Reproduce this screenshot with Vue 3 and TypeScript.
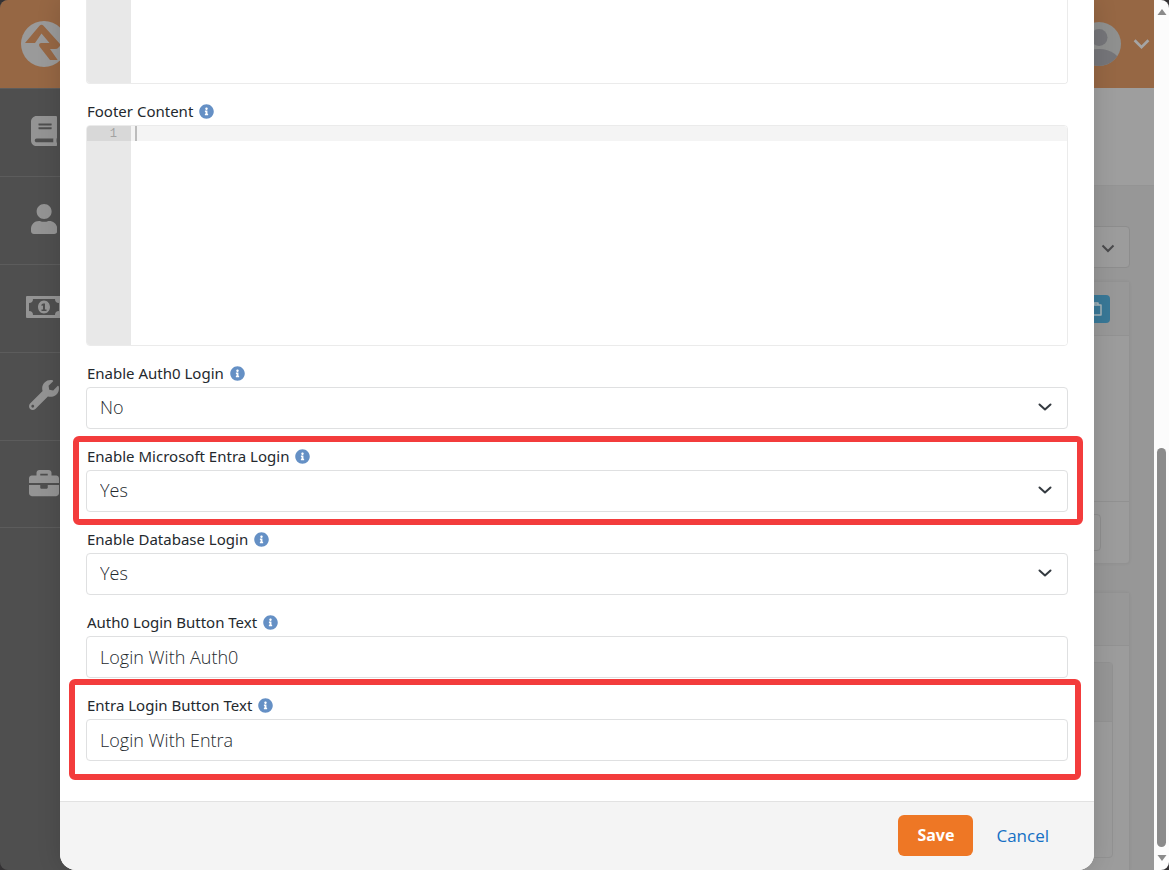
<script setup lang="ts">
import { ref } from 'vue'

interface Field {
  id: string
  label: string
  kind: 'select' | 'text'
  value: string
  highlight?: 'select-mark' | 'text-mark'
}

const header = ref('')
const footer = ref('')

const fields = ref<Field[]>([
  { id: 'auth0', label: 'Enable Auth0 Login', kind: 'select', value: 'No' },
  { id: 'entra', label: 'Enable Microsoft Entra Login', kind: 'select', value: 'Yes', highlight: 'select-mark' },
  { id: 'database', label: 'Enable Database Login', kind: 'select', value: 'Yes' },
  { id: 'auth0-text', label: 'Auth0 Login Button Text', kind: 'text', value: 'Login With Auth0' },
  { id: 'entra-text', label: 'Entra Login Button Text', kind: 'text', value: 'Login With Entra', highlight: 'text-mark' },
])

const infoPath =
  'M256 8C119.043 8 8 119.083 8 256c0 136.997 111.043 248 248 248s248-111.003 248-248C504 119.083 392.957 8 256 8zm0 110c23.196 0 42 18.804 42 42s-18.804 42-42 42-42-18.804-42-42 18.804-42 42-42zm56 254c0 6.627-5.373 12-12 12h-88c-6.627 0-12-5.373-12-12v-24c0-6.627 5.373-12 12-12h12v-64h-12c-6.627 0-12-5.373-12-12v-24c0-6.627 5.373-12 12-12h64c6.627 0 12 5.373 12 12v100h12c6.627 0 12 5.373 12 12v24z'

const navItems = [
  {
    name: 'Library',
    box: '0 0 448 512',
    path: 'M448 360V24c0-13.3-10.7-24-24-24H96C43 0 0 43 0 96v320c0 53 43 96 96 96h328c13.3 0 24-10.7 24-24v-16c0-7.5-3.5-14.3-8.9-18.7-4.2-15.4-4.2-59.3 0-74.7 5.4-4.3 8.9-11.1 8.9-18.6zM128 134c0-3.3 2.7-6 6-6h212c3.3 0 6 2.7 6 6v20c0 3.3-2.7 6-6 6H134c-3.3 0-6-2.7-6-6v-20zm0 64c0-3.3 2.7-6 6-6h212c3.3 0 6 2.7 6 6v20c0 3.3-2.7 6-6 6H134c-3.3 0-6-2.7-6-6v-20zm253.4 250H96c-17.7 0-32-14.3-32-32 0-17.6 14.4-32 32-32h285.4c-1.9 17.1-1.9 46.9 0 64z',
  },
  {
    name: 'People',
    box: '0 0 448 512',
    path: 'M224 256c70.7 0 128-57.3 128-128S294.7 0 224 0 96 57.3 96 128s57.3 128 128 128zm89.6 32h-16.7c-22.2 10.2-46.9 16-72.9 16s-50.6-5.8-72.9-16h-16.7C60.2 288 0 348.2 0 422.4V464c0 26.5 21.5 48 48 48h352c26.5 0 48-21.5 48-48v-41.6c0-74.2-60.2-134.4-134.4-134.4z',
  },
  {
    name: 'Finance',
    box: '0 0 36 30',
    path: 'M1 4H35a1 1 0 0 1 1 1V25a1 1 0 0 1-1 1H1a1 1 0 0 1-1-1V5a1 1 0 0 1 1-1ZM7 7A4 4 0 0 1 3 11V19A4 4 0 0 1 7 23H29A4 4 0 0 1 33 19V11A4 4 0 0 1 29 7ZM18 8.500C21.300 8.500 24 11.400 24 15S21.300 21.500 18 21.500 12 18.600 12 15 14.700 8.500 18 8.500ZM17 11.500 15.500 12.500V14L17 13.500V17.500H15.500V19H20.500V17.500H19V11.500Z',
  },
  {
    name: 'Tools',
    box: '0 0 512 512',
    path: 'M507.73 109.1c-2.24-9.03-13.54-12.09-20.12-5.51l-74.36 74.36-67.88-11.31-11.31-67.88 74.36-74.36c6.62-6.62 3.43-17.9-5.66-20.16-47.38-11.74-99.55.91-136.58 37.93-39.64 39.64-50.55 97.1-34.05 147.2L18.74 402.76c-24.99 24.99-24.99 65.51 0 90.5 24.99 24.99 65.51 24.99 90.5 0l213.21-213.21c50.12 16.71 107.47 5.68 147.37-34.22 37.07-37.07 49.7-89.32 37.91-136.73zM64 472c-13.25 0-24-10.75-24-24 0-13.26 10.75-24 24-24s24 10.74 24 24c0 13.25-10.75 24-24 24z',
  },
  {
    name: 'Admin',
    box: '0 0 512 512',
    path: 'M320 336c0 8.84-7.16 16-16 16h-96c-8.84 0-16-7.16-16-16v-48H0v144c0 25.6 22.4 48 48 48h416c25.6 0 48-22.4 48-48V288H320v48zm144-208h-80V80c0-25.6-22.4-48-48-48H176c-25.6 0-48 22.4-48 48v48H48c-25.6 0-48 22.4-48 48v80h512v-80c0-25.6-22.4-48-48-48zm-144 0H192V96h128v32z',
  },
]
</script>

<template>
  <div class="window">
    <div class="app">
      <nav class="sidebar" aria-label="Main">
        <a class="logo" href="#" aria-label="Home">
          <svg viewBox="0 0 46 46" aria-hidden="true">
            <circle cx="23" cy="23" r="23" fill="#9a9a9a" />
            <path
              d="M18.500 4.800Q20.500 2.600 22.500 4.800L38.600 22.500Q40 24.500 37.500 26.500 36.500 28 34 28H29L36.700 39H29L18.500 25.500Q17 22 20.500 22H28.500L20.500 12.500 14 22H4Z"
              fill="#966744"
            />
          </svg>
        </a>
        <a v-for="item in navItems" :key="item.name" class="nav-item" href="#" :aria-label="item.name">
          <svg :viewBox="item.box" aria-hidden="true"><path :d="item.path" fill-rule="evenodd" /></svg>
        </a>
      </nav>
      <div class="main">
        <header class="topbar">
          <svg class="avatar" viewBox="0 0 44 44" aria-hidden="true">
            <defs>
              <clipPath id="face"><circle cx="22" cy="22" r="22" /></clipPath>
            </defs>
            <g clip-path="url(#face)">
              <rect width="44" height="44" fill="#8f908f" />
              <circle cx="22" cy="15.500" r="8.500" fill="#757579" />
              <ellipse cx="22" cy="43" rx="22" ry="16" fill="#757579" />
            </g>
          </svg>
          <svg class="caret" viewBox="0 0 16 16" aria-hidden="true">
            <path d="M1.500 4 8 10.500l6.500-6.500" fill="none" stroke="#a5a5a5" stroke-width="2.500" />
          </svg>
        </header>
        <div class="title-band"></div>
        <div class="content">
          <div class="picker">
            <svg viewBox="0 0 16 16" aria-hidden="true">
              <path d="M2.500 6.500 8 12l5.500-5.500" fill="none" stroke="#4a4a4c" stroke-width="2" />
            </svg>
          </div>
          <section class="panel panel-first">
            <div class="panel-head">
              <span class="chip">
                <svg viewBox="0 0 16 16" aria-hidden="true">
                  <path d="M3 4h10v10H3zM6 4V2h4v2" fill="none" stroke="#a8b4b9" stroke-width="1.500" stroke-linejoin="round" />
                </svg>
              </span>
            </div>
            <div class="panel-body"></div>
            <div class="panel-foot"><div class="page-size"></div></div>
          </section>
          <section class="panel panel-second">
            <div class="panel-head"></div>
            <div class="nested"><div class="nested-head"></div></div>
          </section>
        </div>
      </div>

      <div class="modal" role="dialog" aria-modal="true" aria-label="Block settings">
        <form class="modal-form" @submit.prevent>
          <div class="modal-body">
            <div class="field">
              <div class="editor editor-top">
                <div class="gutter"></div>
                <textarea v-model="header" class="code" aria-label="Header Content"></textarea>
              </div>
            </div>
            <div class="field">
              <div class="label-row">
                <label for="footer-content">Footer Content</label>
                <svg class="info" viewBox="0 0 512 512" aria-hidden="true"><path :d="infoPath" /></svg>
              </div>
              <div class="editor">
                <div class="gutter"><span class="line-number">1</span></div>
                <textarea id="footer-content" v-model="footer" class="code code-active"></textarea>
                <span class="cursor"></span>
              </div>
            </div>
            <div v-for="field in fields" :key="field.id" class="field" :class="field.highlight">
              <div class="label-row">
                <label :for="field.id">{{ field.label }}</label>
                <svg class="info" viewBox="0 0 512 512" aria-hidden="true"><path :d="infoPath" /></svg>
              </div>
              <div class="control-wrap">
                <select v-if="field.kind === 'select'" :id="field.id" v-model="field.value" class="control">
                  <option>Yes</option>
                  <option>No</option>
                </select>
                <input v-else :id="field.id" v-model="field.value" class="control" type="text" />
                <svg v-if="field.kind === 'select'" class="chevron" viewBox="0 0 16 16" aria-hidden="true">
                  <path d="M2.500 5.500 8 10.500l5.500-5" fill="none" stroke="#343a40" stroke-width="2" stroke-linecap="round" stroke-linejoin="round" />
                </svg>
              </div>
            </div>
          </div>
          <footer class="modal-footer">
            <button class="save" type="submit">Save</button>
            <a class="cancel" href="#">Cancel</a>
          </footer>
        </form>
      </div>
    </div>

    <div class="scrollbar" aria-hidden="true">
      <svg viewBox="0 0 10 8"><path d="M5 1 9.500 7H.5Z" /></svg>
      <div class="track"><div class="thumb"></div></div>
      <svg viewBox="0 0 10 8"><path d="M5 7 9.500 1H.5Z" /></svg>
    </div>
  </div>
</template>

<style>
body {
  margin: 0;
  background: #343234;
}
</style>

<style scoped>
.window,
.window * {
  box-sizing: border-box;
}
.window {
  display: flex;
  min-height: 100vh;
  overflow: hidden;
  border-radius: 8px;
  font-family: "Open Sans", "Noto Sans", sans-serif;
  color: #343a40;
}
.app {
  position: relative;
  display: flex;
  flex: 1;
  min-width: 0;
  overflow: hidden;
}
.sidebar {
  display: flex;
  flex-direction: column;
  width: 88px;
  background: #4f4f4f;
}
.logo {
  display: flex;
  align-items: center;
  justify-content: center;
  height: 88px;
  background: #966744;
}
.logo svg {
  width: 46px;
  height: 46px;
}
.nav-item {
  display: flex;
  align-items: center;
  justify-content: center;
  height: 88px;
  padding-bottom: 3px;
  border-top: 1px solid #5c5c5c;
}
.nav-item:last-child {
  border-bottom: 1px solid #5c5c5c;
}
.nav-item svg {
  height: 30px;
  fill: #949494;
}
.main {
  display: flex;
  flex: 1;
  flex-direction: column;
  background: #979797;
}
.topbar {
  display: flex;
  align-items: center;
  justify-content: flex-end;
  gap: 12px;
  height: 88px;
  padding-right: 4px;
  background: #966744;
}
.avatar {
  width: 44px;
  height: 44px;
}
.caret {
  width: 17px;
  height: 17px;
}
.title-band {
  height: 98px;
  background: #9e9e9e;
  border-bottom: 1px solid #949494;
}
.content {
  display: flex;
  flex: 1;
  flex-direction: column;
  padding: 40px 24px 0;
}
.picker {
  display: flex;
  align-items: center;
  justify-content: flex-end;
  height: 42px;
  padding-right: 13px;
  border: 1px solid #8d8d8d;
  border-radius: 4px;
  background: #9c9c9c;
}
.picker svg {
  width: 16px;
  height: 16px;
}
.panel {
  border: 1px solid #929292;
  border-radius: 4px;
  background: #9c9c9c;
  box-shadow: 0 0 3px rgba(0, 0, 0, 0.06);
}
.panel-head {
  display: flex;
  align-items: center;
  justify-content: flex-end;
  height: 54px;
  padding-right: 19px;
  border-bottom: 1px solid #929292;
  background: #989898;
}
.panel-first {
  margin-top: 13px;
}
.chip {
  display: flex;
  align-items: center;
  justify-content: center;
  width: 28px;
  height: 28px;
  border-radius: 4px;
  background: #397897;
}
.chip svg {
  width: 16px;
  height: 16px;
}
.panel-body {
  height: 165px;
}
.panel-foot {
  padding: 12px 28px;
  border-top: 1px solid #919191;
}
.page-size {
  height: 37px;
  border: 1px solid #8e8e8e;
  border-radius: 4px;
}
.panel-second {
  flex: 1;
  margin-top: 28px;
  border-bottom: 0;
  border-radius: 4px 4px 0 0;
}
.panel-second .panel-head {
  height: 53px;
}
.nested {
  height: 196px;
  margin: 16px 16px 8px;
  border: 1px solid #929292;
  border-radius: 4px;
}
.nested-head {
  height: 59px;
  border-bottom: 1px solid #929292;
  background: #969696;
}

.modal {
  position: absolute;
  inset: 0 60px;
  overflow: hidden;
  border-radius: 0 0 16px 16px;
  background: #fff;
  box-shadow: 0 0 24px rgba(0, 0, 0, 0.14);
}
.modal-form {
  display: flex;
  flex-direction: column;
  height: 100%;
}
.modal-body {
  display: flex;
  flex: 1;
  flex-direction: column;
  gap: 16px;
  padding: 0 26px;
}
.field {
  position: relative;
}
.label-row {
  display: flex;
  align-items: center;
  gap: 6px;
  height: 22px;
  margin-bottom: 3px;
  padding-left: 1px;
  color: #24292e;
  font-family: "Noto Sans", "Open Sans", sans-serif;
  font-size: 15px;
  font-weight: 400;
  line-height: 22px;
}
.info {
  width: 15px;
  height: 15px;
  fill: #6590c5;
}
.editor {
  position: relative;
  display: flex;
  height: 221px;
  overflow: hidden;
  border: 1px solid #ebebeb;
  border-radius: 4px;
}
.editor-top {
  height: 84px;
  border-top: 0;
  border-radius: 0 0 4px 4px;
}
.gutter {
  width: 44px;
  background: #e8e8e8;
}
.line-number {
  display: block;
  height: 15px;
  padding-right: 14px;
  background: #d8d8d8;
  color: #a2a2a2;
  font-family: "Liberation Mono", monospace;
  font-size: 12px;
  line-height: 17px;
  text-align: right;
}
.code {
  flex: 1;
  padding: 0 5px;
  border: 0;
  outline: 0;
  resize: none;
  background: #fff;
  font-family: "Liberation Mono", monospace;
  font-size: 12px;
  line-height: 15px;
}
.code-active {
  background: linear-gradient(#f4f4f4, #f4f4f4) top / 100% 15px no-repeat #fff;
}
.cursor {
  position: absolute;
  top: 0;
  left: 48px;
  width: 2px;
  height: 15px;
  background: #bcbcbc;
}
.control-wrap {
  position: relative;
}
.control {
  display: block;
  width: 100%;
  height: 42px;
  margin: 0;
  padding: 0 13px;
  border: 1px solid #dfe0e1;
  border-radius: 4px;
  outline: 0;
  appearance: none;
  background: #fff;
  color: #24292e;
  font-family: inherit;
  font-size: 18px;
  font-weight: 300;
}
select.control {
  padding-bottom: 2px;
}
.chevron {
  position: absolute;
  top: 12px;
  right: 15px;
  width: 16px;
  height: 16px;
  pointer-events: none;
}
.select-mark::after,
.text-mark::after {
  position: absolute;
  border: 6px solid #f33c3c;
  border-radius: 6px;
  content: "";
  pointer-events: none;
}
.select-mark::after {
  inset: -9px -15px -13px -13px;
}
.text-mark::after {
  inset: -15px -13px -19px -17px;
}
.modal-footer {
  display: flex;
  align-items: center;
  justify-content: flex-end;
  gap: 23px;
  height: 69px;
  padding: 0 45px 2px 0;
  border-top: 1px solid #e2e2e2;
  background: #f4f4f4;
}
.save {
  width: 75px;
  height: 41px;
  padding: 0;
  border: 0;
  border-radius: 6px;
  background: #ee7725;
  color: #fff;
  font-family: "Noto Sans", "Open Sans", sans-serif;
  font-size: 16px;
  font-weight: 700;
}
.cancel {
  color: #1570c4;
  font-size: 17px;
  text-decoration: none;
}

.scrollbar {
  display: flex;
  flex-direction: column;
  align-items: center;
  width: 15px;
  padding: 8px 0;
  background: #fcfcfc;
}
.scrollbar svg {
  width: 10px;
  height: 8px;
  fill: #8b8b8b;
}
.track {
  display: flex;
  flex: 1;
  flex-direction: column;
  justify-content: flex-end;
  padding-bottom: 7px;
}
.thumb {
  width: 9px;
  height: 48%;
  border-radius: 5px;
  background: #8b8b8b;
}
</style>
